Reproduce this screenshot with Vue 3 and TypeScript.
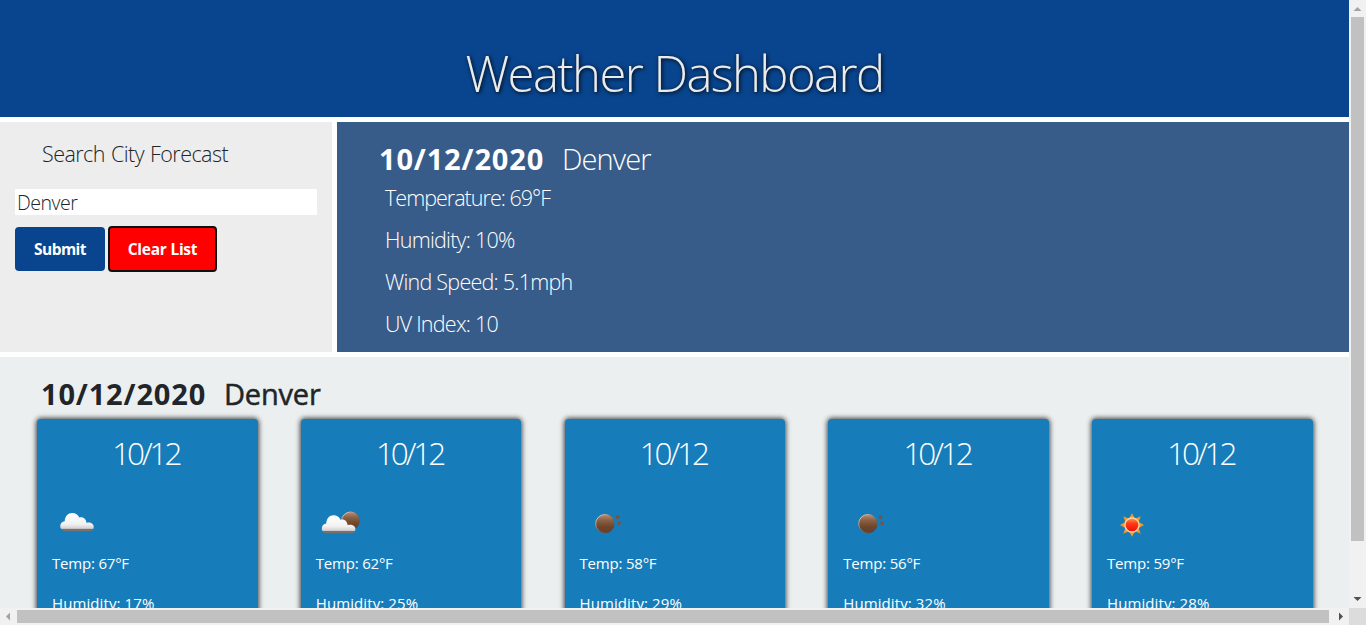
<script setup lang="ts">
type Sky = 'cloud' | 'partly' | 'mist' | 'sun'

interface Day {
  date: string
  sky: Sky
  temp: number
  humidity: number
}

const city = 'Denver'
const today = '10/12/2020'

const current: string[] = [
  'Temperature: 69°F',
  'Humidity: 10%',
  'Wind Speed: 5.1mph',
  'UV Index: 10',
]

const days: Day[] = [
  { date: '10/12', sky: 'cloud', temp: 67, humidity: 17 },
  { date: '10/12', sky: 'partly', temp: 62, humidity: 25 },
  { date: '10/12', sky: 'mist', temp: 58, humidity: 29 },
  { date: '10/12', sky: 'mist', temp: 56, humidity: 32 },
  { date: '10/12', sky: 'sun', temp: 59, humidity: 28 },
]
</script>

<template>
  <div class="window">
    <div class="page">
      <svg class="defs" width="0" height="0" aria-hidden="true">
        <defs>
          <linearGradient id="cloudFill" x1="0" y1="0" x2="0" y2="1">
            <stop offset="0" stop-color="#ffffff" />
            <stop offset="0.6" stop-color="#f3f2f3" />
            <stop offset="0.84" stop-color="#d5d3d4" />
            <stop offset="0.9" stop-color="#77716f" />
            <stop offset="1" stop-color="#77716f" />
          </linearGradient>
          <linearGradient id="moonFill" x1="0" y1="0" x2="0" y2="1">
            <stop offset="0" stop-color="#b98f74" />
            <stop offset="0.3" stop-color="#8d6246" />
            <stop offset="0.65" stop-color="#70462c" />
            <stop offset="1" stop-color="#65402b" />
          </linearGradient>
          <linearGradient id="rimFill" x1="0" y1="0" x2="0.8" y2="1">
            <stop offset="0" stop-color="#f3e2d6" />
            <stop offset="0.5" stop-color="#9a725b" />
            <stop offset="1" stop-color="#503a30" />
          </linearGradient>
          <linearGradient id="sunFill" x1="0" y1="0" x2="0" y2="1">
            <stop offset="0" stop-color="#ff9a55" />
            <stop offset="0.4" stop-color="#fb3b16" />
            <stop offset="1" stop-color="#f80806" />
          </linearGradient>
        </defs>
      </svg>

      <header class="banner"><h1>Weather Dashboard</h1></header>

      <div class="top">
        <section class="search">
          <h2>Search City Forecast</h2>
          <div class="field">{{ city }}</div>
          <div class="buttons">
            <button class="btn submit" type="button">Submit</button>
            <button class="btn clear" type="button">Clear List</button>
          </div>
        </section>
        <section class="current">
          <div class="heading">
            <b>{{ today }}</b><span>{{ city }}</span>
          </div>
          <p v-for="(line, i) in current" :key="line" :class="'line l' + i">{{ line }}</p>
        </section>
      </div>

      <section class="forecast">
        <div class="heading dark">
          <b>{{ today }}</b><span>{{ city }}</span>
        </div>
        <div class="cards">
          <article v-for="(day, i) in days" :key="i" class="card">
            <h3>{{ day.date }}</h3>
            <svg class="sky" width="60" height="40" viewBox="0 0 60 40">
              <path
                v-if="day.sky === 'cloud'"
                d="M15 31.2c-2.800-.2-4.800-2.300-4.800-4.900 0-2.800 2-4.600 4.500-5 .2-4.700 3.200-8.200 7.600-8.200 3.300 0 5.600 1.700 6.900 4.500 3-.9 6.900.8 7.300 5.300 3.900-1 7.200.800 7.200 4 0 2.500-1.600 4.100-4.300 4.300z"
                fill="url(#cloudFill)"
              />
              <g v-if="day.sky === 'partly'" transform="translate(-3.8 0)">
                <circle cx="40.300" cy="20.800" r="8.800" fill="url(#moonFill)" stroke="url(#rimFill)" />
                <path
                  d="M16 33.300c-2.800-.2-4.400-2.300-4.400-4.900 0-2.800 2-4.600 4.400-5 .2-4.700 3.200-8.200 7.400-8.200 3.300 0 5.600 1.700 6.900 4.500 3-.9 6.700.8 7.100 5.300 4.300-1 7.800.8 7.800 4 0 2.500-1.800 4.100-4.500 4.300z"
                  fill="url(#cloudFill)"
                />
              </g>
              <g v-if="day.sky === 'mist'" transform="translate(2.4 0)">
                <circle cx="24.500" cy="23.700" r="9.200" fill="url(#moonFill)" stroke="url(#rimFill)" />
                <circle cx="37.200" cy="17.200" r="1.900" fill="#735547" />
                <circle cx="38.700" cy="23.400" r="1.800" fill="#735547" />
              </g>
              <template v-if="day.sky === 'sun'">
                <path
                  d="M27 13.300l3 5.500 5.700-2.500-2 5.700 5.300 3-5.300 3 2 5.700-5.700-2.500-3 5.500-3-5.500-5.700 2.500 2-5.700-5.300-3 5.300-3-2-5.700 5.700 2.500z"
                  fill="#f39a24"
                />
                <circle cx="27" cy="25" r="7" fill="url(#sunFill)" stroke="#ffd3a2" stroke-width="1.300" />
              </template>
            </svg>
            <p class="temp">Temp: {{ day.temp }}°F</p>
            <p>Humidity: {{ day.humidity }}%</p>
          </article>
        </div>
      </section>
    </div>

    <div class="vbar">
      <svg width="17" height="17"><path d="M4.500 11h8l-4-4z" fill="#a3a3a3" /></svg>
      <div class="vthumb"></div>
      <svg class="end" width="17" height="17"><path d="M4.500 6h8l-4 4z" fill="#505050" /></svg>
    </div>
    <div class="hbar">
      <svg width="17" height="17"><path d="M10 4.500v8l-4-4z" fill="#a3a3a3" /></svg>
      <div class="hthumb"></div>
      <svg class="end" width="20" height="17"><path d="M10 4.500v8l4-4z" fill="#505050" /></svg>
    </div>
    <div class="corner"></div>
  </div>
</template>

<style>
body {
  margin: 0;
  overflow: hidden;
}
</style>

<style scoped>
.window {
  display: grid;
  grid-template: 608px 17px / 1349px 17px;
  width: 1366px;
  height: 625px;
  overflow: hidden;
  font-family: 'Open Sans', 'Noto Sans', sans-serif;
  background: #fff;
}
.page {
  overflow: hidden;
}
.defs {
  display: block;
}
h1,
h2,
h3,
p {
  margin: 0;
  font-weight: 300;
  white-space: nowrap;
}
.banner {
  box-sizing: border-box;
  height: 117px;
  padding-top: 43px;
  background: #09458e;
  text-align: center;
}
h1 {
  font-size: 49px;
  line-height: 60px;
  letter-spacing: -1.580px;
  color: #ebebeb;
  text-shadow: 1px 1px 4px #000;
}
.top {
  display: grid;
  grid-template-columns: 332px 1012px;
  gap: 5px;
  height: 230px;
  margin: 5px 0;
}
.search {
  padding: 0 15px;
  background: #ededed;
}
h2 {
  padding: 17px 0 0 27px;
  font-size: 21.500px;
  line-height: 30px;
  letter-spacing: -0.550px;
  word-spacing: 1px;
  color: #212529;
}
.field {
  height: 26px;
  margin-top: 20px;
  padding-left: 2px;
  background: #fff;
  font-size: 19.500px;
  font-weight: 300;
  line-height: 28px;
  letter-spacing: -0.500px;
  color: #212529;
}
.buttons {
  display: flex;
  gap: 3px;
  margin-top: 11px;
}
.btn {
  height: 46px;
  padding: 0;
  border: 0;
  border-radius: 4px;
  font-family: inherit;
  font-size: 15.500px;
  font-weight: 700;
  letter-spacing: -0.250px;
  color: #fff;
}
.submit {
  width: 90px;
  height: 44px;
  margin-top: 1px;
  background: #09458e;
  letter-spacing: -0.550px;
}
.clear {
  width: 109px;
  border: 2px solid #101010;
  background: #f00;
}
.current {
  padding: 17px 0 0 42px;
  background: #385c89;
  color: #fff;
}
.heading {
  display: flex;
  height: 40px;
  font-size: 29px;
  line-height: 40px;
  white-space: nowrap;
}
.heading b {
  width: 183px;
  font-weight: 700;
  letter-spacing: 0.850px;
}
.heading span {
  font-weight: 300;
  letter-spacing: -0.900px;
}
.line {
  padding-left: 6px;
  font-size: 21.500px;
  line-height: 42px;
  letter-spacing: -0.750px;
}
.l0 {
  margin-top: -2px;
  letter-spacing: -0.980px;
}
.forecast {
  height: 251px;
  padding-top: 17px;
  background: #ebeff0;
  overflow: hidden;
}
.dark {
  padding-left: 41px;
  color: #212529;
}
.dark span {
  font-weight: 500;
  letter-spacing: -0.200px;
  -webkit-text-stroke: 0.500px #212529;
}
.cards {
  display: flex;
  gap: 43.250px;
  padding: 5px 0 0 37px;
}
.card {
  box-sizing: border-box;
  flex: none;
  width: 220.500px;
  height: 300px;
  padding: 14px 15px 0;
  border-radius: 4px;
  background: #167dba;
  box-shadow: 0 0 5px 1px #444;
  color: #fff;
}
h3 {
  font-size: 31.500px;
  line-height: 40px;
  letter-spacing: -3.100px;
  text-align: center;
  text-indent: -3px;
}
.sky {
  display: block;
  margin: 27px 0 0 -2px;
}
.card p {
  height: 40px;
  font-size: 15px;
  font-weight: 400;
  line-height: 46px;
  letter-spacing: 0.100px;
}
.card .temp {
  letter-spacing: -0.200px;
}
.vbar {
  display: flex;
  flex-direction: column;
  align-items: center;
  background: #f1f1f1;
}
.vthumb {
  width: 13px;
  height: 524px;
  background: #c1c1c1;
}
.hbar {
  display: flex;
  align-items: center;
  background: #f1f1f1;
}
.hthumb {
  width: 1312px;
  height: 13px;
  background: #c1c1c1;
}
.vbar .end {
  margin-top: auto;
}
.hbar .end {
  flex: none;
}
.corner {
  background: #dcdcdc;
}
</style>
